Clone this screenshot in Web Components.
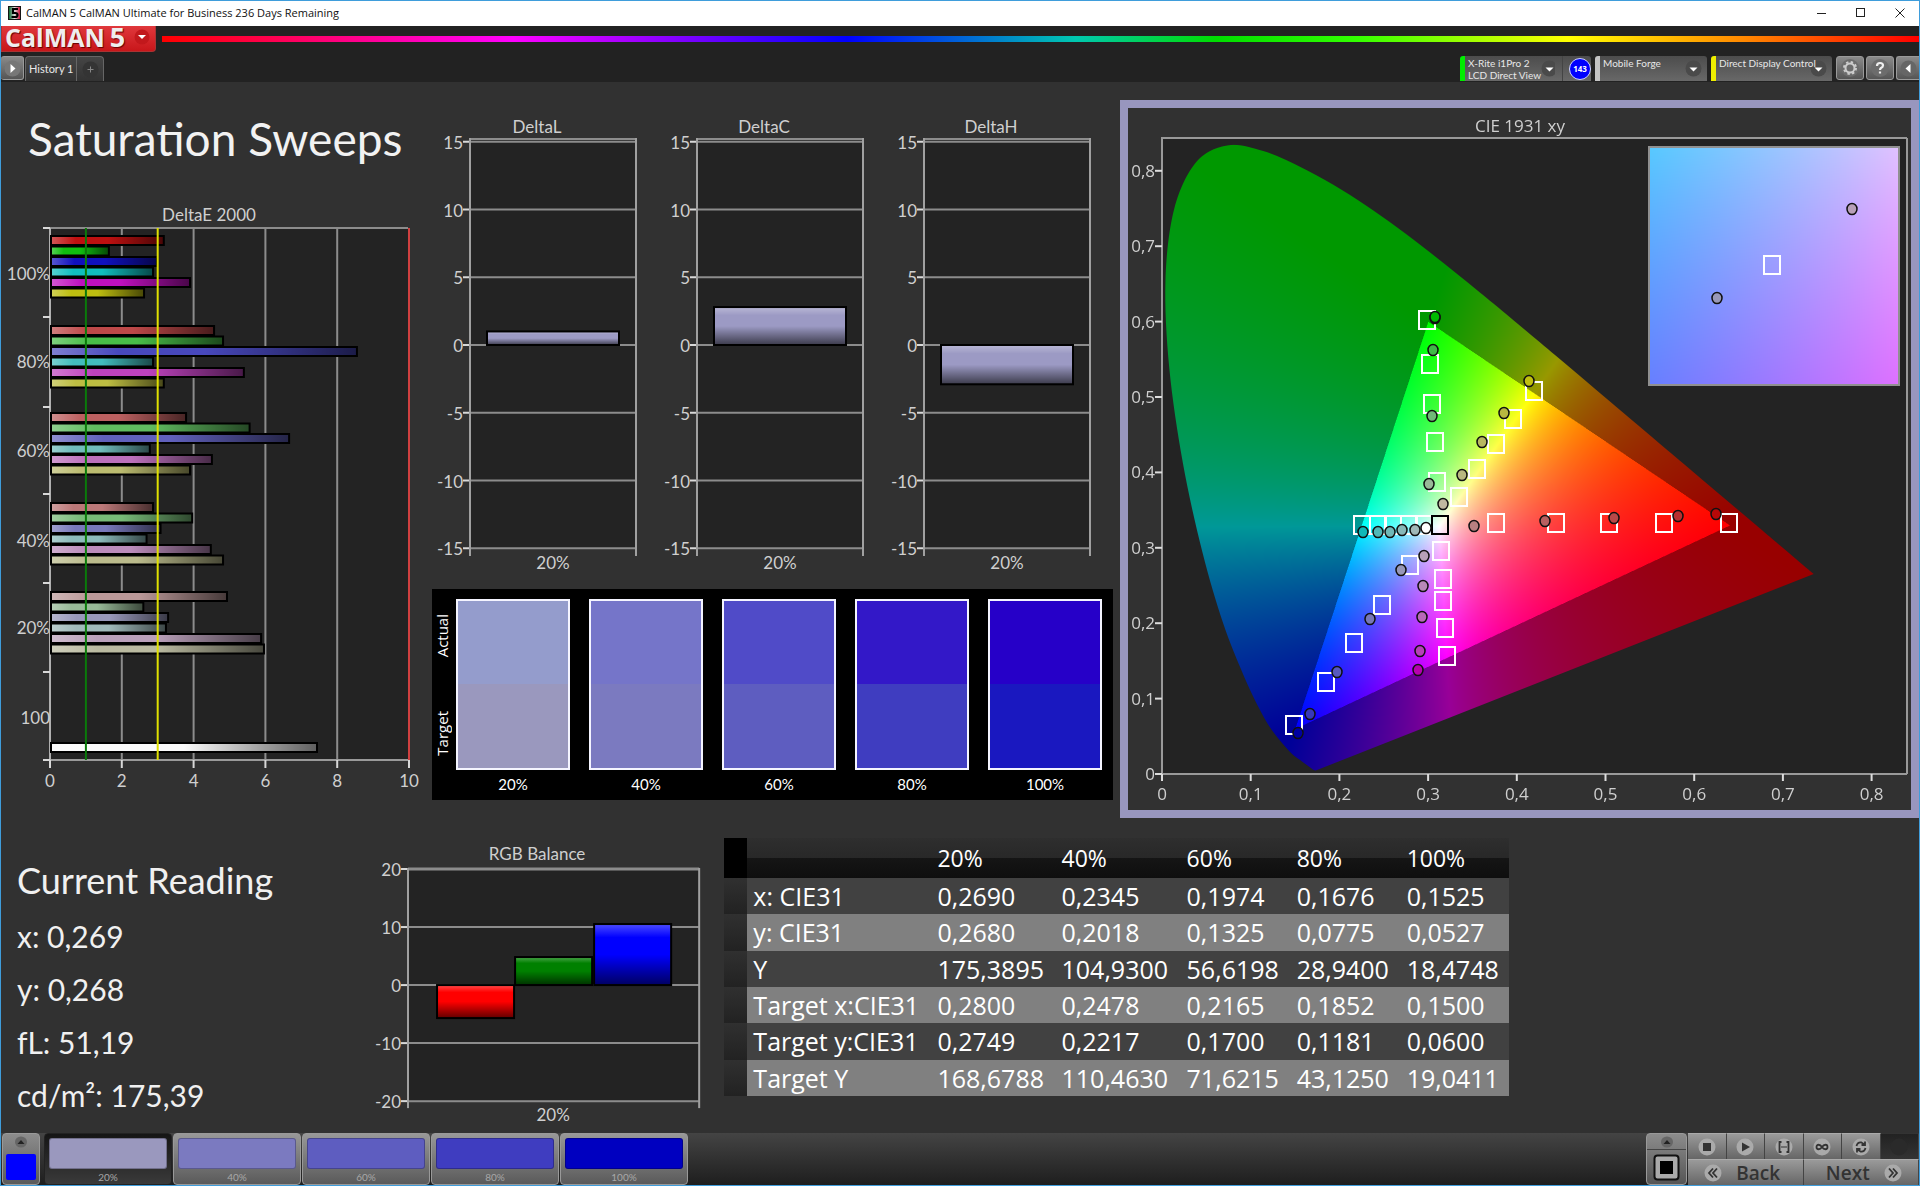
<!DOCTYPE html>
<html lang="en">
<head>
<meta charset="utf-8">
<title>CalMAN 5 CalMAN Ultimate for Business 236 Days Remaining</title>
<style>
  html, body { margin: 0; }
  body {
    min-height: 100vh; box-sizing: border-box; display: flex; flex-direction: column;
    border: 1px solid #3f9ddb; background: #313131; color: #e6e6e6;
    --label: Lato, "Liberation Sans", sans-serif;
    --ui: "Open Sans", "Noto Sans", sans-serif;
    font-family: var(--label);
  }
  main { flex: 1; }
  .row { display: grid; }
  .upper { grid-template-columns: 431fr 688fr 799fr; padding-top: 18px; align-items: start; }
  .lower { grid-template-columns: 369fr 340fr 798fr 410fr; align-items: start; }
  h1 { margin: 0; padding-left: 27px; height: 100px; line-height: 78px; font-weight: 400; font-size: 46px; color: #f2f2f2; white-space: nowrap; }
  .middle { padding: 10px 7px 0 0; }
  .deltas { display: grid; grid-template-columns: repeat(3, 1fr); margin-bottom: 9px; }
  rgb-chart { margin-top: 16px; }
  result-table { margin: 20px 0 0 14px; }
</style>
</head>
<body>
  <title-bar>CalMAN 5 CalMAN Ultimate for Business 236 Days Remaining</title-bar>
  <brand-bar></brand-bar>
  <tool-strip></tool-strip>
  <main>
    <div class="row upper">
      <section>
        <h1>Saturation Sweeps</h1>
        <delta-e-chart></delta-e-chart>
      </section>
      <section class="middle">
        <div class="deltas">
          <delta-chart heading="DeltaL" value="1"></delta-chart>
          <delta-chart heading="DeltaC" value="2.8"></delta-chart>
          <delta-chart heading="DeltaH" value="-2.9"></delta-chart>
        </div>
        <swatch-panel></swatch-panel>
      </section>
      <cie-chart></cie-chart>
    </div>
    <div class="row lower">
      <current-reading>
        <span slot="title">Current Reading</span>
        <span>x: 0,269</span>
        <span>y: 0,268</span>
        <span>fL: 51,19</span>
        <span>cd/m²: 175,39</span>
      </current-reading>
      <rgb-chart></rgb-chart>
      <result-table></result-table>
    </div>
  </main>
  <pattern-bar></pattern-bar>

<script>
class Part extends HTMLElement {
  constructor() {
    super();
    this.attachShadow({ mode: 'open' });
  }
  connectedCallback() {
    this.shadowRoot.innerHTML =
      '<style>:host{display:block;box-sizing:border-box}*{box-sizing:border-box}button,select{font:inherit;color:inherit;margin:0;padding:0;border:0;background:none}' +
      this.css() + '</style>' + this.html();
    this.ready();
  }
  css() { return ''; }
  html() { return ''; }
  ready() {}
}

const line = (x1, y1, x2, y2, c = '#8c8c8c', w = 2) =>
  `<line x1="${x1}" y1="${y1}" x2="${x2}" y2="${y2}" stroke="${c}" stroke-width="${w}"/>`;
const label = (x, y, t, a = 'middle', s = 17) =>
  `<text x="${x}" y="${y}" text-anchor="${a}" font-size="${s}">${t}</text>`;
const chartCss = 'svg{display:block;width:100%;height:auto;font-family:var(--label)}text{fill:#cfcfcf}';
const shade = (id, vertical) =>
  `<linearGradient id="${id}" x1="0" y1="0" x2="${vertical ? 0 : 1}" y2="${vertical ? 1 : 0}">
    <stop offset="0" stop-color="#fff" stop-opacity=".3"/><stop offset=".22" stop-color="#fff" stop-opacity="0"/>
    <stop offset=".5" stop-color="#000" stop-opacity="0"/><stop offset="1" stop-color="#000" stop-opacity=".62"/></linearGradient>`;
const bar = (x, y, w, h, c, g) =>
  `<rect x="${x}" y="${y}" width="${w}" height="${h}" fill="${c}"/><rect x="${x}" y="${y}" width="${w}" height="${h}" fill="url(#${g})" stroke="#000" stroke-width="2"/>`;

customElements.define('title-bar', class extends Part {
  css() { return `
    :host{display:flex;align-items:center;height:25px;padding:0 0 2px 7px;background:#fff;color:#111;font:11px var(--ui)}
    .app{margin-right:5px} .name{flex:1} button{width:39px;height:23px;display:grid;place-items:center}`; }
  html() { return `
    <svg class="app" width="13" height="14" viewBox="0 0 13 14"><defs><linearGradient id="a" x2="1"><stop stop-color="#0a6b30"/><stop offset=".5" stop-color="#ddd"/><stop offset="1" stop-color="#d0103a"/></linearGradient></defs>
      <rect width="13" height="14" fill="#151515"/><rect x="1" y="1" width="11" height="12" fill="url(#a)"/><path d="M10 3H5V7h2.500q2 0 2 2t-2 2H3.500" fill="none" stroke="#000" stroke-width="2.200"/></svg>
    <span class="name"><slot></slot></span>
    <button aria-label="Minimize"><svg width="10" height="10"><path d="M0 5.500h9" stroke="#222"/></svg></button>
    <button aria-label="Maximize"><svg width="10" height="10"><rect x=".5" y=".5" width="8" height="8" fill="none" stroke="#222"/></svg></button>
    <button aria-label="Close"><svg width="10" height="10"><path d="M.5 .5l9 9M9.500 .5l-9 9" stroke="#222"/></svg></button>`; }
});

customElements.define('brand-bar', class extends Part {
  css() { return `
    :host{display:flex;align-items:flex-start;height:30px;background:#222;gap:6px}
    button{display:flex;align-items:center;justify-content:space-between;width:155px;height:26px;padding:0 5px 4px 3px;border:1px solid #a33;border-top:0;border-radius:0 0 4px 0;
      background:linear-gradient(#e0383c,#c8161a)}
    .logo{display:flex;align-items:center;font:700 25px/20px var(--ui);color:#eee;text-shadow:1px 1px 1px #600;white-space:nowrap;gap:5px}
    .five{font-size:27px}
    .bar{flex:1;height:6px;margin-top:10px;background:linear-gradient(90deg,#f00,#f0f 20%,#00f 39%,#00c8b0 52%,#0d0 60%,#3f0 68%,#ff0 80%,#f80 90%,#f00 100%)}`; }
  html() { return `
    <button aria-label="CalMAN 5 menu"><span class="logo"><span>CalMAN</span><span class="five">5</span></span>
      <svg width="16" height="16"><circle cx="8" cy="8" r="7.500" fill="#c2181c"/><path d="M4 6h8l-4 4z" fill="#fff"/></svg></button>
    <div class="bar"></div>`; }
});

customElements.define('tool-strip', class extends Part {
  css() { return `
    :host{display:flex;align-items:stretch;height:26px;background:#222;font:11px/14px var(--label);color:#e8e8e8}
    button,select{cursor:default}
    .sq{width:28px;height:24px;border:1px solid #9a9a9a;border-radius:3px;background:linear-gradient(#8a8a8a,#555);display:grid;place-items:center;margin-right:2px}
    .play{width:23px;border-left:0;margin-right:1px} .last{width:23px;border-right:0;border-radius:3px 0 0 3px;margin:0}
    .tabs{display:flex;margin-right:auto;height:25px;border:1px solid #666;border-bottom:0;border-radius:4px 4px 0 0;background:linear-gradient(#454545,#333)}
    .tabs button{padding:0 3px} .tabs button+button{width:27px;border-left:1px solid #666;display:grid;place-items:center}
    .drop{display:flex;height:25px;margin-right:4px;border-left:5px solid var(--c);border-radius:3px 3px 0 0;background:linear-gradient(#4c4c4c,#686868)}
    .meter{display:flex;align-items:center;width:98px;text-align:left;font-size:10px;line-height:12px;white-space:nowrap;padding-left:3px;justify-content:space-between;border-right:1px solid #444}
    .meter svg{margin-right:7px}
    .count{width:28px;display:grid;place-items:center end}
    .count b{width:22px;height:22px;border:1px solid #cfd4ff;border-radius:50%;background:#00f;font:700 8px/20px var(--ui);color:#fff;text-align:center}
    .pick{display:grid;align-items:center} .pick select{grid-area:1/1;appearance:none;width:var(--w);height:25px;padding:0 0 12px 3px;font-size:10px;position:relative}
    .pick svg{grid-area:1/1;justify-self:end;margin-right:5px;pointer-events:none}`; }
  html() {
    const arrow = '<svg width="17" height="17"><circle cx="8.500" cy="8.500" r="8" fill="#4a4a4a"/><path d="M4.500 7.500h8l-4 4z" fill="#fff"/></svg>';
    return `
    <button class="sq play" aria-label="Show panel"><svg width="17" height="17"><circle cx="8.500" cy="8.500" r="8" fill="#777"/><path d="M6.500 4l5 4.500-5 4.500z" fill="#fff"/></svg></button>
    <div class="tabs"><button>History 1</button><button aria-label="Add tab"><svg width="17" height="17"><circle cx="8.500" cy="8.500" r="8" fill="#343434"/><path d="M8.500 5.500v6M5.500 8.500h6" stroke="#888"/></svg></button></div>
    <div class="drop" style="--c:#0e0"><button class="meter"><span>X-Rite i1Pro 2<br>LCD Direct View</span>${arrow}</button><button class="count"><b>143</b></button></div>
    <div class="drop pick" style="--c:#c4c4c4;--w:107px"><select aria-label="Pattern source"><option>Mobile Forge</option></select>${arrow}</div>
    <div class="drop pick" style="--c:#ee0;--w:116px"><select aria-label="Display control"><option>Direct Display Control</option></select>${arrow}</div>
    <button class="sq" aria-label="Settings"><svg width="20" height="20"><circle cx="10" cy="10" r="9" fill="#6c6c6c"/><circle cx="10" cy="10" r="4.500" fill="none" stroke="#ccc" stroke-width="2"/><circle cx="10" cy="10" r="6" fill="none" stroke="#ccc" stroke-width="2" stroke-dasharray="2.400 2.310"/></svg></button>
    <button class="sq" aria-label="Help"><svg width="20" height="20"><circle cx="10" cy="10" r="9" fill="#6c6c6c"/><path d="M7 8q0-3 3-3t3 2.500q0 1.500-2 2.500-1 .6-1 2M10 13.500v2" fill="none" stroke="#eee" stroke-width="2.200"/></svg></button>
    <button class="sq last" aria-label="Collapse"><svg width="17" height="17"><circle cx="8.500" cy="8.500" r="8" fill="#666"/><path d="M10.500 4l-5 4.500 5 4.500z" fill="#fff"/></svg></button>`; }
});

/* Horizontal bars: one group per saturation level, one bar per colour. */
customElements.define('delta-e-chart', class extends Part {
  css() { return chartCss; }
  html() {
    const X = v => 49 + 35.9 * v, left = 49, right = 407, top = 28, base = 560;
    const sat = [[16, 16], [72, 66], [96, 112], [120, 140], [152, 160]];
    const data = [
      [3.17, 1.64, 2.98, 2.87, 3.9, 2.62], [4.57, 4.82, 8.55, 2.87, 5.4, 3.17], [3.79, 5.56, 6.66, 2.78, 4.51, 3.9],
      [2.87, 3.96, 3.08, 2.69, 4.48, 4.82], [4.93, 2.6, 3.29, 3.23, 5.88, 5.96]];
    const starts = [36, 126, 213, 303, 392];
    let s = `<rect x="${left}" y="${top}" width="358" height="532" fill="#232323"/>`;
    for (const v of [2, 4, 6, 8]) s += line(X(v), top, X(v), base);
    s += line(left, top, right, top) + line(left, base, right, base, '#9a9a9a') + line(left, top, left, base, '#b0b0b0');
    data.forEach((row, g) => row.forEach((v, i) => {
      const [p, q] = sat[g], m = 190 - g;
      const c = [[m, p, p], [p, m, p], [p, p, m], [q, m, m], [m, q, m], [m, m, q]][i];
      s += bar(50, starts[g] + i * 10.500, X(v) - 50, 9, `rgb(${c})`, 'h');
    }));
    s += bar(50, 543, 266, 9, '#fafafa', 'h');
    s += line(X(1), top, X(1), base, '#0a7a0a') + line(X(3), top, X(3), base, '#e0e000') + line(right + 1, top, right + 1, base, '#d04040');
    [28, 117, 207, 294, 383, 472, 560].forEach(y => s += line(42, y, 49, y, '#d8d8d8'));
    ['100%', '80%', '60%', '40%', '20%', '100'].forEach((t, i) => s += label(49, [80, 168, 257, 347, 434, 524][i], t, 'end'));
    [0, 2, 4, 6, 8, 10].forEach(v => s += line(X(v), base, X(v), 568, '#d8d8d8') + label(X(v), 587, v));
    return `<svg viewBox="0 0 431 600"><defs>${shade('h', false)}</defs>${s}${label(208, 21, 'DeltaE 2000')}</svg>`;
  }
});

customElements.define('delta-chart', class extends Part {
  css() { return chartCss; }
  html() {
    const Y = v => 235 - 13.550 * v, v = +this.getAttribute('value');
    let s = '<rect x="38" y="29" width="166" height="409" fill="#232323"/>' + line(38, 29, 204, 29);
    for (const t of [15, 10, 5, 0, -5, -10, -15])
      s += line(38, Y(t), 204, Y(t)) + line(31, Y(t), 38, Y(t), '#d8d8d8') + label(31, Y(t) + 7, t, 'end');
    s += line(38, 28, 38, 446, '#a0a0a0') + line(204, 28, 204, 446, '#a0a0a0');
    s += bar(55, Math.min(Y(v), 235), 132, Math.abs(13.550 * v), '#9c9ac4', 'v');
    return `<svg viewBox="0 0 227 470"><defs>${shade('v', true)}</defs>${s}${label(105, 23, this.getAttribute('heading'))}${label(121, 459, '20%')}</svg>`;
  }
});

customElements.define('rgb-chart', class extends Part {
  css() { return chartCss; }
  html() {
    const Y = v => 151 - 5.800 * v;
    let s = '<rect x="38" y="34" width="291" height="232" fill="#232323"/>';
    for (const t of [20, 10, 0, -10, -20])
      s += line(38, Y(t), 329, Y(t), '#8c8c8c', t === 20 ? 3 : 2) + line(31, Y(t), 38, Y(t), '#d8d8d8') + label(31, Y(t) + 7, t, 'end');
    s += line(38, 34, 38, 274, '#a0a0a0') + line(329, 34, 329, 274, '#a0a0a0');
    s += bar(67, 151, 77, 33, '#f00', 'v') + bar(145, 123, 77, 28, '#008000', 'v') + bar(224, 90, 77, 61, '#00f', 'v');
    return `<svg viewBox="0 0 340 295"><defs>${shade('v', true)}</defs>${s}${label(167, 26, 'RGB Balance')}${label(183, 287, '20%')}</svg>`;
  }
});

customElements.define('swatch-panel', class extends Part {
  css() { return `
    :host{display:grid;grid-template-columns:24px 1fr;background:#000;height:211px;color:#fff;padding:10px 11px 0 0}
    .side{display:flex;flex-direction:column;justify-content:space-between;align-items:center;height:171px;padding:15px 4px 14px 0;font:15px/16px var(--ui)}
    .side span{writing-mode:vertical-rl;transform:rotate(180deg)}
    .list{display:grid;grid-template-columns:repeat(5,1fr);gap:19px}
    figure{margin:0;text-align:center;font-size:15px;line-height:29px}
    .c{height:171px;border:2px solid #f4f4ff;background:linear-gradient(var(--a) 50%,var(--t) 50%)}`; }
  html() {
    return '<div class="side"><span>Actual</span><span>Target</span></div><div class="list">' +
      [['20%', '#949ccc', '#9a98be'], ['40%', '#7575c9', '#7b7ac0'], ['60%', '#504bc8', '#5e5dc0'], ['80%', '#3318c8', '#3f3dc0'], ['100%', '#2600c8', '#1a18c0']]
        .map(([t, a, b]) => `<figure><div class="c" style="--a:${a};--t:${b}"></div><figcaption>${t}</figcaption></figure>`).join('') + '</div>';
  }
});

customElements.define('cie-chart', class extends Part {
  css() { return chartCss + `
    :host{display:grid;border:8px solid #9896be;background:#313131}
    svg,canvas{grid-area:1/1;display:block;width:100%;height:auto}
    svg{font-family:var(--ui)}`; }
  html() {
    const X = v => 34 + 88.700 * v * 10, Y = v => 666 - 75.400 * v * 10;
    let s = line(33, 30, 779, 30, '#999') + line(779, 30, 779, 666, '#999') + line(33, 666, 779, 666, '#999') + line(34, 30, 34, 673, '#999');
    for (let i = 0; i <= 8; i++) {
      const t = i ? '0,' + i : '0';
      s += line(27, Y(i / 10), 34, Y(i / 10), '#ddd') + label(27, Y(i / 10) + 6, t, 'end');
      s += line(X(i / 10), 666, X(i / 10), 673, '#ddd') + label(X(i / 10), 692, t);
    }
    const sq = (x, y, c = '#fff') => `<rect x="${x - 8}" y="${y - 9}" width="16" height="18" fill="none" stroke="${c}" stroke-width="2"/>`;
    const dot = (x, y, c) => `<ellipse cx="${x}" cy="${y}" rx="5" ry="5.500" fill="${c}" stroke="#111" stroke-width="1.500"/>`;
    s += '<g transform="translate(1 1)">';
    [[298,211],[301,255],[303,295],[306,333],[308,373],[405,282],[384,310],[367,335],[348,360],[330,388],[367,414],[427,414],[480,414],[535,414],[600,414],
     [233,416],[249,416],[264,416],[280,416],[295,416],[312,442],[314,470],[314,492],[316,519],[318,547],[281,456],[253,496],[225,534],[197,573],[165,616]]
      .forEach(p => s += sq(...p));
    s += sq(311, 416, '#000');
    [[306,209,'#085808'],[306,208,'#0b0'],[304,241,'#40b848'],[303,307,'#70b878'],[300,375,'#98b898'],
     [400,272,'#c0c010'],[375,304,'#b8b840'],[353,333,'#b8b860'],[333,366,'#b8b880'],[314,395,'#c0b8a0'],
     [345,417,'#b88080'],[416,412,'#b86060'],[485,409,'#b84848'],[549,407,'#b83030'],[587,405,'#b80808'],
     [234,423,'#10b8b8'],[249,423,'#50b8b8'],[261,423,'#70b8b8'],[273,421,'#88b8b8'],[286,421,'#a0b8b8'],[297,419,'#fff'],
     [295,447,'#b8a0b8'],[294,477,'#b888b8'],[293,508,'#b868b8'],[291,542,'#b840b8'],[289,561,'#b800b0'],
     [272,461,'#9898b8'],[241,510,'#7878b8'],[208,563,'#5858c0'],[181,605,'#3838b8'],[169,624,'#0000a0']].forEach(p => s += dot(...p));
    s += '</g>' + sq(644, 157) + dot(724, 101, '#b8a0b8') + dot(589, 190, '#9898b8');
    s += '<rect x="521" y="39" width="250" height="238" fill="none" stroke="#909090" stroke-width="2"/>';
    return `<canvas width="1566" height="1404"></canvas><svg viewBox="0 0 783 702">${s}${label(392, 24, 'CIE 1931 xy')}</svg>`;
  }
  ready() {
    const cv = this.shadowRoot.querySelector('canvas'), g = cv.getContext('2d');
    const W = cv.width, H = cv.height;
    const rgb = (x, y) => {
      const z = 1 - x - y;
      const c = [3.2406 * x - 1.5372 * y - 0.4986 * z, -0.9689 * x + 1.8758 * y + 0.0415 * z, 0.0557 * x - 0.2040 * y + 1.0570 * z];
      const k = Math.min(...c) < 0 ? 152 : 255, m = Math.max(...c);
      return c.map(v => Math.max(0, v) / m * k);
    };
    const paint = (w, h, fx, fy) => {
      const off = document.createElement('canvas');
      off.width = w; off.height = h;
      const o = off.getContext('2d'), im = o.createImageData(w, h);
      for (let j = 0, k = 0; j < h; j++) for (let i = 0; i < w; i++, k += 4) {
        const [r, gg, b] = rgb(fx(i), fy(j));
        im.data[k] = r; im.data[k + 1] = gg; im.data[k + 2] = b; im.data[k + 3] = 255;
      }
      o.putImageData(im, 0, 0);
      return off;
    };
    g.fillStyle = '#232323';
    g.fillRect(68, 60, 1490, 1272);
    const L = [[.1741,.005],[.1714,.0051],[.1644,.0109],[.1566,.0177],[.144,.0297],[.1241,.0578],[.1096,.0868],[.0913,.1327],[.0687,.2007],[.0454,.295],[.0235,.4127],
      [.0082,.5384],[.0039,.6548],[.0139,.7502],[.0389,.812],[.0743,.8338],[.1142,.8262],[.1547,.8059],[.1929,.7816],[.2296,.7543],[.2658,.7243],[.3016,.6923],
      [.3373,.6589],[.3731,.6245],[.4441,.5547],[.5125,.4866],[.5752,.4242],[.627,.3725],[.6658,.334],[.6915,.3083],[.719,.2809],[.7347,.2653]]
      .map(([x, y]) => [68 + 1774 * x, 1332 - 1508 * y]);
    g.save();
    g.beginPath();
    g.moveTo(...L[0]);
    for (let i = 0; i < L.length - 1; i++) {
      const a = L[Math.max(0, i - 1)], b = L[i], c = L[i + 1], d = L[Math.min(L.length - 1, i + 2)];
      g.bezierCurveTo(b[0] + (c[0] - a[0]) / 6, b[1] + (c[1] - a[1]) / 6, c[0] - (d[0] - b[0]) / 6, c[1] - (d[1] - b[1]) / 6, c[0], c[1]);
    }
    g.closePath();
    g.clip();
    g.drawImage(paint(W, H, i => (i - 68) / 1774, j => (1332 - j) / 1508), 0, 0);
    g.restore();
    /* Magnified view centred on the 20 % blue target. */
    g.drawImage(paint(502, 478, i => .28 + (i - 251) / 10090, j => .2749 - (j - 239) / 9560), 1041, 77);
  }
});

customElements.define('current-reading', class extends Part {
  css() { return `
    :host{padding:37px 0 0 16px;color:#f0f0f0;font-size:30px;line-height:40px;white-space:nowrap}
    .t{display:block;font-size:36px;line-height:50px;margin-bottom:11px}
    .v{display:flex;flex-direction:column;gap:13px}`; }
  html() { return '<div class="t"><slot name="title"></slot></div><div class="v"><slot></slot></div>'; }
});

customElements.define('result-table', class extends Part {
  css() { return `
    table{width:100%;height:258px;table-layout:fixed;border-collapse:collapse;font:25px/30px var(--ui);color:#fff}
    th,td{padding:0 0 0 6px;text-align:left;font-weight:400;white-space:nowrap}
    thead tr{height:40px;background:linear-gradient(#2e2e2e,#282828 50%,#151515 50%,#0e0e0e);font-size:23px}
    thead td:first-child{background:#000}
    tbody tr{background:#414141}
    tbody tr:nth-child(even){background:#808080}
    tbody td:first-child{background:linear-gradient(#303030,#222)}`; }
  html() {
    const rows = [
      ['x: CIE31', '0,2690', '0,2345', '0,1974', '0,1676', '0,1525'],
      ['y: CIE31', '0,2680', '0,2018', '0,1325', '0,0775', '0,0527'],
      ['Y', '175,3895', '104,9300', '56,6198', '28,9400', '18,4748'],
      ['Target x:CIE31', '0,2800', '0,2478', '0,2165', '0,1852', '0,1500'],
      ['Target y:CIE31', '0,2749', '0,2217', '0,1700', '0,1181', '0,0600'],
      ['Target Y', '168,6788', '110,4630', '71,6215', '43,1250', '19,0411']];
    return `<table><colgroup>${[23, 184, 124, 125, 110, 110, 108].map(w => `<col style="width:${w}px">`).join('')}</colgroup>
      <thead><tr><td></td><td></td>${['20%', '40%', '60%', '80%', '100%'].map(t => `<th scope="col">${t}</th>`).join('')}</tr></thead>
      <tbody>${rows.map(([h, ...r]) => `<tr><td></td><th scope="row">${h}</th>${r.map(v => `<td>${v}</td>`).join('')}</tr>`).join('')}</tbody></table>`;
  }
});

customElements.define('pattern-bar', class extends Part {
  css() { return `
    :host{display:flex;height:52px;background:linear-gradient(#444,#1e1e1e);padding-left:1px;color:#a8a8a8;font-size:10px}
    .menu{width:38px;margin-right:4px;border:1px solid #999;border-radius:4px;background:linear-gradient(#8c8c8c,#5a5a5a);display:flex;flex-direction:column;align-items:center;justify-content:space-between;padding:2px 0 4px}
    .menu i{width:30px;height:26px;background:#00f;border-radius:2px}
    .pats{display:flex;gap:1px;margin-right:auto}
    .pats button{width:128px;padding:4px 4px 0;border:1px solid #999;border-radius:4px;background:linear-gradient(#989898,#5a5a5a);display:flex;flex-direction:column;justify-content:flex-start;gap:2px;line-height:12px}
    .pats button:first-child{background:linear-gradient(#151515,#3a3a3a);border-color:#222}
    .pats i{flex:none;width:100%;height:31px;border:1px solid #0004;border-radius:3px;background:var(--c)}
    .pats span{width:100%;text-align:center}
    .run{display:grid;grid-template-rows:15px 1fr;width:41px;border:1px solid #999;border-radius:4px;background:linear-gradient(#8c8c8c,#555);margin-right:1px}
    .run button{display:grid;place-items:center} .run button+button{border-top:1px solid #444}
    .nav{display:grid;grid-template-columns:repeat(6,1fr);grid-template-rows:26px 26px;width:231px;color:#333}
    .nav button{display:flex;align-items:center;justify-content:center;border-top:1px solid #aaa;border-right:1px solid #444;background:linear-gradient(#9a9a9a,#666)}
    .nav .off{background:linear-gradient(#222,#333);border-top-color:#333}
    .nav .wide{grid-column:span 3;font:600 19px/20px var(--ui);gap:14px}
    .nav .back{padding-right:6px} .nav .next{padding-left:6px}`; }
  html() {
    const up = '<svg width="14" height="12"><ellipse cx="7" cy="6" rx="6" ry="5.500" fill="#666"/><path d="M3.500 8h7L7 4z" fill="#222"/></svg>';
    const ic = p => `<svg width="18" height="18" fill="none" stroke="#333" stroke-width="1.800"><circle cx="9" cy="9" r="8.500" fill="#aaa" stroke="none"/>${p}</svg>`;
    return `<button class="menu" aria-label="Pattern window">${up}<i></i></button>
    <div class="pats">${[['20%', '#9a98be'], ['40%', '#7b7ac0'], ['60%', '#5e5dc0'], ['80%', '#3f3dc0'], ['100%', '#0000c0']].map(([t, c]) => `<button><i style="--c:${c}"></i><span>${t}</span></button>`).join('')}</div>
    <div class="run"><button aria-label="Expand">${up}</button><button aria-label="Stop all"><svg width="27" height="27"><rect x="1.500" y="1.500" width="24" height="24" rx="3" fill="#aaa" stroke="#111" stroke-width="2"/><rect x="7" y="7" width="13" height="13" fill="#000"/></svg></button></div>
    <div class="nav">
      <button aria-label="Stop">${ic('<rect x="5" y="5" width="8" height="8" fill="#333" stroke="none"/>')}</button>
      <button aria-label="Play">${ic('<path d="M6 4.500l8 4.500-8 4.500z" fill="#333" stroke="none"/>')}</button>
      <button aria-label="Read series">${ic('<path d="M6.500 4h-2v10h2M11.500 4h2v10h-2M6.500 9h1m1 0h1m1 0h1"/>')}</button>
      <button aria-label="Continuous">${ic('<path d="M9 9C7 6 3.500 6 3.500 9S7 12 9 9S14.500 6 14.500 9S11 12 9 9z"/>')}</button>
      <button aria-label="Refresh">${ic('<path d="M4.500 8q1-4 5-3.500l3 2M13.500 10q-1 4-5 3.500l-3-2M13 3.500v3.500H9.500M5 14.500V11h3.500"/>')}</button>
      <button class="off" aria-label="Idle"><svg width="18" height="18"><circle cx="9" cy="9" r="8.500" fill="#2a2a2a"/></svg></button>
      <button class="wide back">${ic('<path d="M9 4.500L5 9l4 4.500M13 4.500L9 9l4 4.500"/>')}Back</button>
      <button class="wide next">Next${ic('<path d="M5 4.500L9 9l-4 4.500M9 4.500L13 9l-4 4.500"/>')}</button>
    </div>`;
  }
});
</script>
</body>
</html>
